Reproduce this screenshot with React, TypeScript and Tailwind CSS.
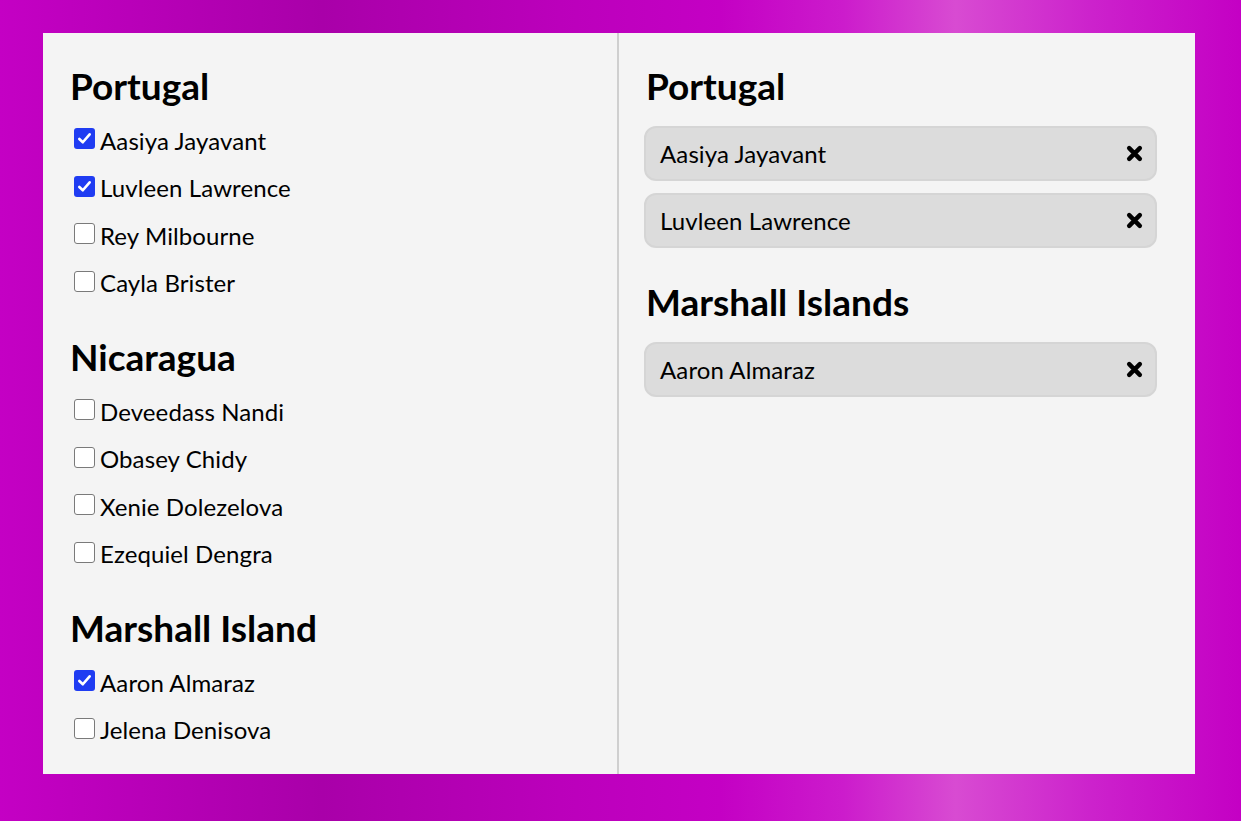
import React from "react";

const groups = [
  {
    name: "Portugal",
    people: [
      { name: "Aasiya Jayavant", checked: true },
      { name: "Luvleen Lawrence", checked: true },
      { name: "Rey Milbourne", checked: false },
      { name: "Cayla Brister", checked: false },
    ],
  },
  {
    name: "Nicaragua",
    people: [
      { name: "Deveedass Nandi", checked: false },
      { name: "Obasey Chidy", checked: false },
      { name: "Xenie Dolezelova", checked: false },
      { name: "Ezequiel Dengra", checked: false },
    ],
  },
  {
    name: "Marshall Island",
    people: [
      { name: "Aaron Almaraz", checked: true },
      { name: "Jelena Denisova", checked: false },
    ],
  },
];

const selected = [
  { name: "Portugal", people: ["Aasiya Jayavant", "Luvleen Lawrence"] },
  { name: "Marshall Islands", people: ["Aaron Almaraz"] },
];

function Checkbox({ checked }: { checked: boolean }) {
  if (checked) {
    return (
      <span className="ml-[4px] mr-[5px] -mt-[4px] flex h-[21px] w-[21px] items-center justify-center rounded-[3px] bg-[#1f3cf2]">
        <svg width="15" height="15" viewBox="0 0 16 16">
          <path
            d="M2.5 8.5 L6.2 12 L13.5 3.5"
            fill="none"
            stroke="white"
            strokeWidth="2.8"
            strokeLinecap="round"
            strokeLinejoin="round"
          />
        </svg>
      </span>
    );
  }
  return (
    <span className="ml-[4px] mr-[5px] -mt-[4px] block h-[21px] w-[21px] rounded-[3px] border border-[#7a7a7a] bg-white" />
  );
}

function Tag({ name }: { name: string }) {
  return (
    <div className="flex h-[55px] items-center justify-between rounded-[12px] border-2 border-[#d5d5d5] bg-[#dcdcdc] pl-[14px] pr-[12px]">
      <span className="text-[24px] tracking-[0.1px]">{name}</span>
      <svg width="17" height="17" viewBox="0 0 16 16">
        <path
          d="M3 3 L13 13 M13 3 L3 13"
          stroke="black"
          strokeWidth="4.2"
          strokeLinecap="round"
        />
      </svg>
    </div>
  );
}

export default function App() {
  return (
    <div
      className="min-h-screen bg-[linear-gradient(90deg,#c400c4_0%,#b100b1_18%,#a900a9_26%,#bb00bb_45%,#c400c4_58%,#cc1ccc_68%,#d84bd2_77%,#cc22cc_88%,#c400c4_100%)] pl-[43px] pt-[33px] text-black"
      style={{ fontFamily: "Lato, 'Open Sans', sans-serif" }}
    >
      <div className="grid h-[741px] w-[1152px] grid-cols-[576px_576px] bg-[#f4f4f4]">
        <div className="flex flex-col gap-[26px] border-r-2 border-[#cfcfcf] pl-[27px] pt-[29px]">
          {groups.map((g) => (
            <section key={g.name}>
              <h2 className="mb-[10px] pt-[2px] text-[37px] font-bold leading-[43px]">
                {g.name}
              </h2>
              {g.people.map((p) => (
                <label key={p.name} className="flex h-[47.5px] items-center text-[24px] tracking-[0.1px]">
                  <Checkbox checked={p.checked} />
                  <span>{p.name}</span>
                </label>
              ))}
            </section>
          ))}
        </div>
        <div className="pl-[25px] pr-[38px] pt-[29px]">
          {selected.map((g) => (
            <section key={g.name} className="mb-[30px]">
              <h2 className="mb-[19px] pl-[2px] pt-[2px] text-[37px] font-bold leading-[43px]">
                {g.name}
              </h2>
              <div className="flex flex-col gap-[12px]">
                {g.people.map((p) => (
                  <Tag key={p} name={p} />
                ))}
              </div>
            </section>
          ))}
        </div>
      </div>
    </div>
  );
}
